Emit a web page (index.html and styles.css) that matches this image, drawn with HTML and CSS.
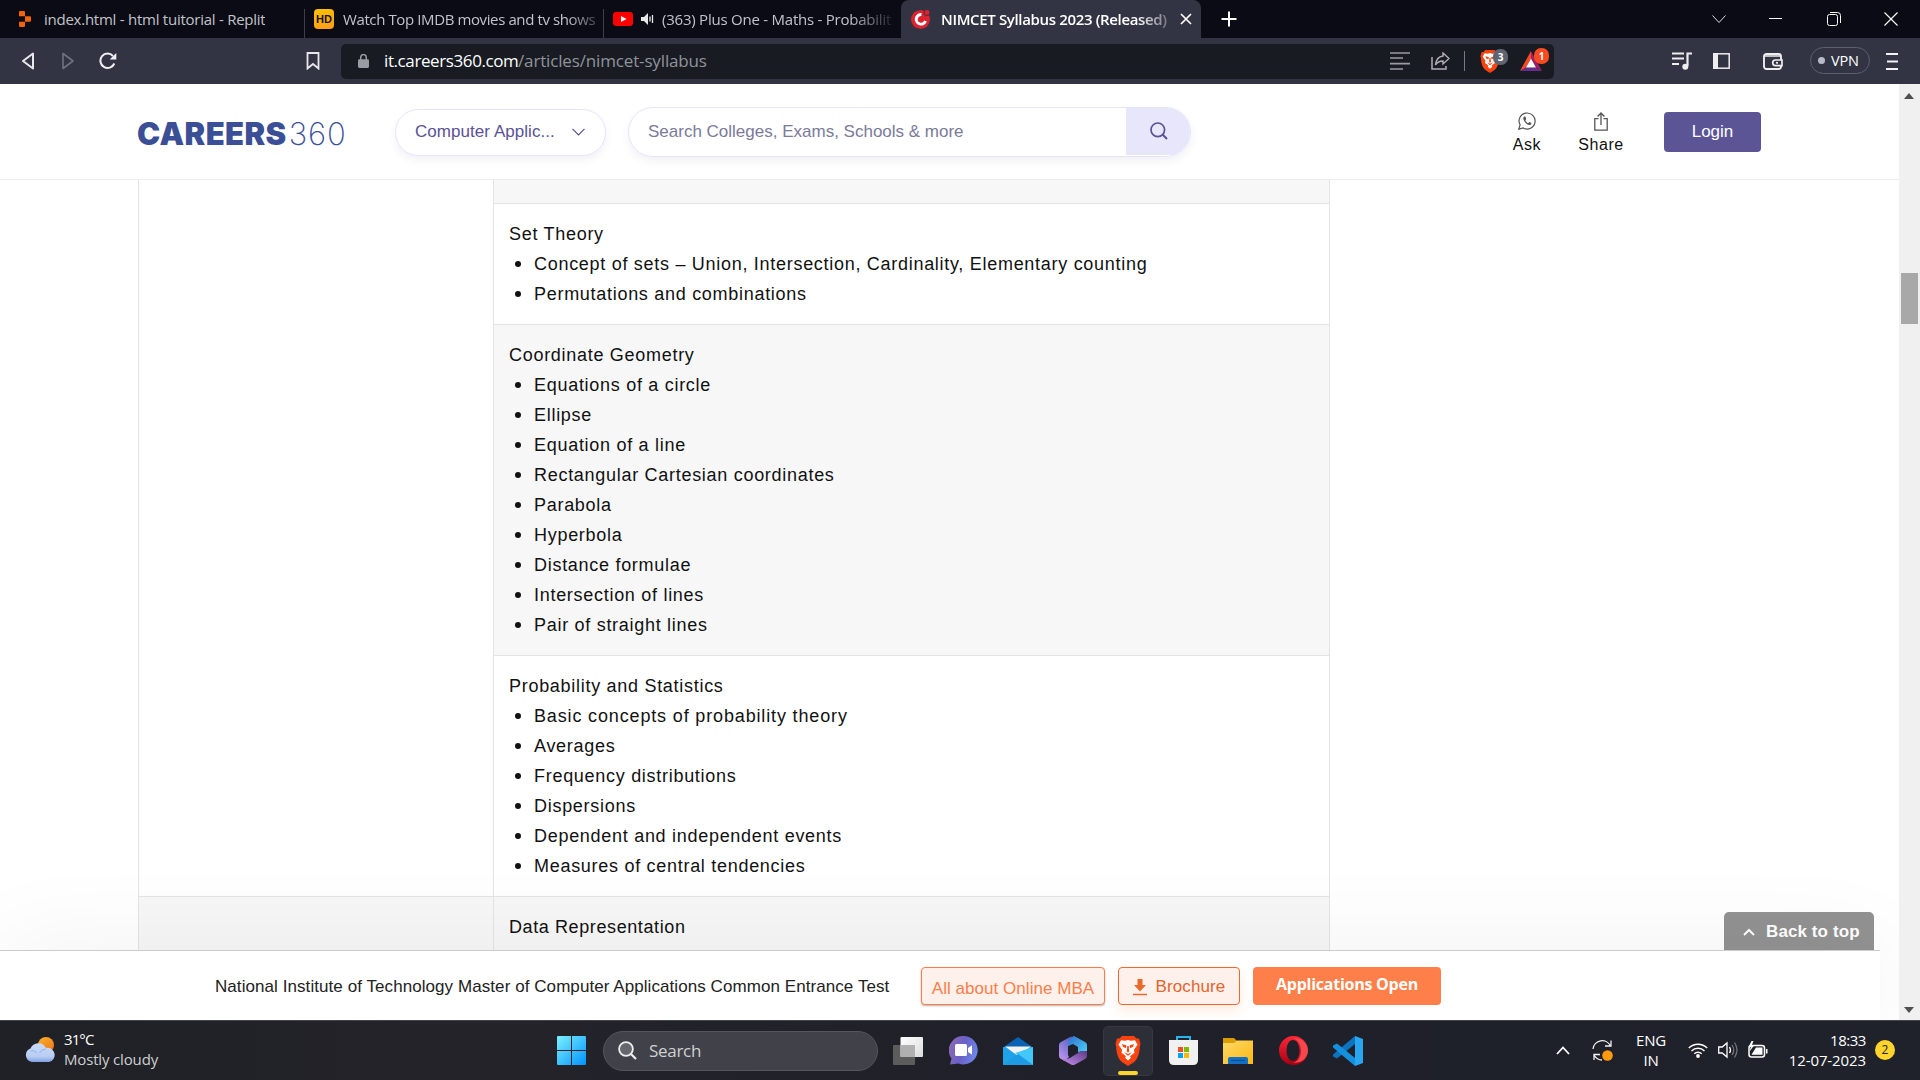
FILE: index.html
```html
<!DOCTYPE html>
<html lang="en">
<head>
<meta charset="utf-8">
<title>NIMCET Syllabus 2023 (Released)</title>
<link rel="stylesheet" href="styles.css">
</head>
<body>
<div class="screen">

  <div class="tabstrip">
    <div class="tab t1">
      <svg class="fav" width="12" height="16" viewBox="0 0 12 16"><path fill="#f26207" d="M0 1q0-1 1-1h4q1 0 1 1v4.300H0zM6 5.300h5q1 0 1 1v3.400q0 1-1 1H6zM0 10.700h6V15q0 1-1 1H1q-1 0-1-1z"/></svg>
      <span class="tt tt1">index.html - html tuitorial - Replit</span>
    </div>
    <div class="tab t2">
      <span class="hd">HD</span>
      <span class="tt tt2">Watch Top IMDB movies and tv shows</span>
    </div>
    <div class="tab t3">
      <svg class="fav" width="20" height="14" viewBox="0 0 20 14"><rect width="20" height="14" rx="3" fill="#f00"/><path d="M8 4l5.500 3L8 10z" fill="#fff"/></svg>
      <svg class="spk" width="13" height="12" viewBox="0 0 13 12"><path fill="#e8e8ea" d="M0 4h3l4-4v12L3 8H0z"/><path d="M9 3.500v5M11.500 2v8" stroke="#e8e8ea" stroke-width="1.300"/></svg>
      <span class="tt tt3">(363) Plus One - Maths - Probabilit</span>
    </div>
    <div class="tab active">
      <svg class="fav" width="20" height="20" viewBox="0 0 20 20"><circle cx="9.500" cy="10.500" r="9.500" fill="#d9232e"/><path d="M10.500 5.500a4.800 4.800 0 1 0 4 6.500" fill="none" stroke="#fff" stroke-width="3"/><circle cx="16" cy="3.500" r="3" fill="#e3202c" stroke="#323444"/></svg>
      <span class="tt tta">NIMCET Syllabus 2023 (Released)</span>
      <svg width="12" height="12" viewBox="0 0 12 12"><path d="M1 1l10 10M11 1L1 11" stroke="#fff" stroke-width="1.700"/></svg>
    </div>
    <svg class="plus" width="16" height="16" viewBox="0 0 16 16"><path d="M8 .5v15M.5 8h15" stroke="#fff" stroke-width="2"/></svg>
    <div class="winbtns">
      <svg width="14" height="14" viewBox="0 0 14 14"><path d="M.5 3.500L7 10.500l6.500-7" fill="none" stroke="#ddd"/></svg>
      <svg width="14" height="14" viewBox="0 0 14 14"><path d="M0 6.500h13" stroke="#fff"/></svg>
      <svg width="14" height="14" viewBox="0 0 14 14"><rect x=".5" y="2.500" width="10" height="11" rx="2" fill="none" stroke="#fff"/><path d="M3 .5h7.500a3 3 0 0 1 3 3V11" fill="none" stroke="#fff"/></svg>
      <svg width="14" height="14" viewBox="0 0 14 14"><path d="M.5.5l13 13M13.500.5l-13 13" stroke="#fff" stroke-width="1.100"/></svg>
    </div>
  </div>

  <div class="toolbar">
    <svg class="back" width="14" height="18" viewBox="0 0 14 18"><path d="M12 1.500v15L2 9z" fill="none" stroke="#e8e8ec" stroke-width="2" stroke-linejoin="round"/></svg>
    <svg class="fwd" width="14" height="18" viewBox="0 0 14 18"><path d="M2 1.500v15L12 9z" fill="none" stroke="#70727e" stroke-width="1.600" stroke-linejoin="round"/></svg>
    <svg class="reload" width="18" height="18" viewBox="0 0 18 18"><path d="M15.300 11.500A7.200 7.200 0 1 1 14 4" fill="none" stroke="#f0f0f3" stroke-width="2"/><path d="M17.300 1v6.500h-6.600z" fill="#f0f0f3"/></svg>
    <svg class="mark" width="14" height="18" viewBox="0 0 14 18"><path d="M1.500 1h11v15.500L7 12l-5.500 4.500z" fill="none" stroke="#e8e8ec" stroke-width="1.800"/></svg>
    <div class="urlbar">
      <svg class="lock" width="11" height="14" viewBox="0 0 12 15"><rect y="5.500" width="12" height="9.500" rx="1.500" fill="#9a9ca4"/><path d="M3 6V3.500a3 3 0 0 1 6 0V6" fill="none" stroke="#9a9ca4" stroke-width="1.700"/></svg>
      <span class="host">it.careers360.com</span><span class="path">/articles/nimcet-syllabus</span>
      <svg class="reader" width="20" height="18" viewBox="0 0 20 18"><path d="M0 1h20M0 6h13M0 11.700h20M0 17h13" stroke="#9b9ca1" stroke-width="1.700"/></svg>
      <svg class="shr" width="19" height="18" viewBox="0 0 19 18"><path d="M1 5v12h14v-3" fill="none" stroke="#aeb0b5" stroke-width="1.500"/><path d="M12 1l6 5.500-6 5.500V9c-4 0-6 1.500-7.500 4C5 8 7.500 4.500 12 4z" fill="none" stroke="#aeb0b5" stroke-width="1.400"/></svg>
      <i class="vsep"></i>
      <span class="ext"><svg width="20" height="23" viewBox="0 0 26 30"><use href="#brave"/></svg><b class="gray">3</b></span>
      <span class="ext bat"><svg width="22" height="20" viewBox="0 0 22 20"><path d="M11 0L0 20l6-3.500 5-9z" fill="#ff4724"/><path d="M0 20h22l-6-3.500H6z" fill="#662d91"/><path d="M11 0l11 20-6-3.500-5-9z" fill="#9e1f63"/><path d="M11 7.500l5 9H6z" fill="#fff"/></svg><b class="red">1</b></span>
    </div>
    <svg class="music" width="20" height="18" viewBox="0 0 20 18"><path d="M0 1.500h12M0 6.500h12M0 12h7" stroke="#eee" stroke-width="2"/><path d="M15.500 14V1.500H20" fill="none" stroke="#eee" stroke-width="2.200"/><circle cx="13.300" cy="14.800" r="3" fill="#eee"/></svg>
    <svg class="side" width="17" height="16" viewBox="0 0 17 16"><rect x=".8" y=".8" width="15.400" height="14.400" fill="none" stroke="#eee" stroke-width="1.500"/><path d="M0 0h5v16H0z" fill="#eee"/></svg>
    <svg class="wallet" width="20" height="17" viewBox="0 0 20 17"><rect x="1" y="1" width="17" height="15" rx="2.500" fill="none" stroke="#eee" stroke-width="1.900"/><path d="M2 3h15" stroke="#eee" stroke-width="1.500"/><path d="M19 7h-6.500a2.800 2.800 0 0 0 0 5.600H19z" fill="#323444" stroke="#eee" stroke-width="1.700"/><circle cx="14" cy="9.800" r="1.100" fill="#eee"/></svg>
    <span class="vpn"><i></i>VPN</span>
    <svg class="menu" width="12" height="17" viewBox="0 0 12 17"><path d="M0 1h12M1 8.500h11M0 16h12" stroke="#f2f2f4" stroke-width="1.900"/></svg>
  </div>

  <div class="viewport">
    <div class="page">
      <header class="site">
        <div class="logo"><b>CAREERS</b><span>360</span></div>
        <div class="domain">Computer Applic...<svg width="13" height="8" viewBox="0 0 13 8"><path d="M.5.8l6 6 6-6" fill="none" stroke="#5a5296" stroke-width="1.200"/></svg></div>
        <div class="search"><span>Search Colleges, Exams, Schools &amp; more</span>
          <div class="go"><svg width="18" height="18" viewBox="0 0 18 18"><circle cx="7.800" cy="7.800" r="6.800" fill="none" stroke="#5a5296" stroke-width="1.700"/><path d="M12.800 12.800l4.200 4.200" stroke="#5a5296" stroke-width="2"/></svg></div>
        </div>
        <div class="act ask"><svg width="18" height="18" viewBox="0 0 18 18"><path d="M.8 17.200l1.300-4.300A8 8 0 1 1 5.200 16z" fill="none" stroke="#555" stroke-width="1.200"/><path d="M6.500 4.500c-1.500.7-1.500 2.300-.5 4.200s3 4 5.200 4.300c1.500.2 2.300-.8 2.200-1.900L11.300 10l-1.200 1.200C8.900 10.700 7.900 9.700 7.300 8.300l1-1.200-.8-2.300z" fill="#555"/></svg>Ask</div>
        <div class="act share"><svg width="14" height="19" viewBox="0 0 14 19"><path d="M4.500 6.700H.8v11.500h12.400V6.700H9.500M7 13V1.500M3.600 4.500L7 1l3.400 3.500" fill="none" stroke="#555" stroke-width="1.300"/></svg>Share</div>
        <div class="login">Login</div>
      </header>

      <div class="content">
        <div class="table">
          <div class="colA"><div class="spanCell"></div><div class="nextCell"></div></div>
          <div class="colB">
            <div class="cell g stub"></div>
            <div class="cell">
              <p>Set Theory</p>
              <ul><li>Concept of sets – Union, Intersection, Cardinality, Elementary counting</li><li>Permutations and combinations</li></ul>
            </div>
            <div class="cell g">
              <p>Coordinate Geometry</p>
              <ul><li>Equations of a circle</li><li>Ellipse</li><li>Equation of a line</li><li>Rectangular Cartesian coordinates</li><li>Parabola</li><li>Hyperbola</li><li>Distance formulae</li><li>Intersection of lines</li><li>Pair of straight lines</li></ul>
            </div>
            <div class="cell">
              <p>Probability and Statistics</p>
              <ul><li class="wide">Basic concepts of probability theory</li><li>Averages</li><li>Frequency distributions</li><li>Dispersions</li><li>Dependent and independent events</li><li>Measures of central tendencies</li></ul>
            </div>
            <div class="cell g last"><p>Data Representation</p></div>
          </div>
        </div>
        <div class="totop"><svg width="12" height="8" viewBox="0 0 12 8"><path d="M1 7l5-5 5 5" fill="none" stroke="#fff" stroke-width="2"/></svg>Back to top</div>
      </div>

      <div class="sticky">
        <span class="exam">National Institute of Technology Master of Computer Applications Common Entrance Test</span>
        <span class="btn mba">All about Online MBA</span>
        <span class="btn bro"><svg width="14" height="17" viewBox="0 0 14 17"><path d="M4.500 0h5v6H13l-6 6.500L1 6h3.500z" fill="#ea6a2c"/><path d="M0 15.500h14" stroke="#ea6a2c" stroke-width="1.500"/></svg>Brochure</span>
        <span class="btn app">Applications Open</span>
      </div>
    </div>
    <div class="scroll">
      <svg width="10" height="6" viewBox="0 0 10 6"><path d="M0 6l5-6 5 6z" fill="#505050"/></svg>
      <div class="thumb"></div>
      <svg class="dn" width="10" height="6" viewBox="0 0 10 6"><path d="M0 0l5 6 5-6z" fill="#505050"/></svg>
    </div>
  </div>

  <div class="taskbar">
    <div class="weather">
      <svg width="30" height="25" viewBox="0 0 30 25"><defs><linearGradient id="cl" x2="0" y2="1"><stop stop-color="#c9dcfa"/><stop offset=".7" stop-color="#b9cdf2"/><stop offset="1" stop-color="#7fa3e6"/></linearGradient><linearGradient id="sun" x2=".6" y2="1"><stop stop-color="#f7b52c"/><stop offset="1" stop-color="#f0761a"/></linearGradient></defs><circle cx="21" cy="8" r="8" fill="url(#sun)"/><path d="M7 25a7 7 0 0 1-1.500-13.500A8.500 8.500 0 0 1 21 11a7 7 0 0 1 3 14z" fill="url(#cl)"/><path d="M5.500 14q3-1.500 6 1.500M21 12q-5 .5-6.500 4" fill="none" stroke="#8fb0ea"/></svg>
      <div><div class="deg">31°C</div><div class="sky">Mostly cloudy</div></div>
    </div>
    <div class="center">
      <svg class="win" width="29" height="29" viewBox="0 0 29 29"><defs><linearGradient id="wg" gradientUnits="userSpaceOnUse" x1="0" y1="0" x2="29" y2="29"><stop stop-color="#7df1ff"/><stop offset="1" stop-color="#0091ff"/></linearGradient></defs><path fill="url(#wg)" d="M0 1q0-1 1-1h13v14H0zM15 0h13q1 0 1 1v13H15zM0 15h14v14H1q-1 0-1-1zM15 15h14v13q0 1-1 1H15z"/></svg>
      <div class="tsearch"><svg width="19" height="19" viewBox="0 0 19 19"><circle cx="8" cy="8" r="6.900" fill="#66676e" stroke="#eee" stroke-width="1.800"/><path d="M13 13l5 5" stroke="#eee" stroke-width="2.200"/></svg>Search</div>
      <div class="app"><svg width="30" height="28" viewBox="0 0 30 28"><defs><linearGradient id="tv" x2="1" y2="1"><stop stop-color="#fff"/><stop offset="1" stop-color="#dcdcdc"/></linearGradient></defs><rect y="8" width="22" height="20" rx="1" fill="#5c5c5c"/><rect x="7.500" width="22.500" height="20" rx="1" fill="url(#tv)"/><path d="M7.500 8H22v12H7.500z" fill="#b0b0b0"/></svg></div>
      <div class="app"><svg width="29" height="29" viewBox="0 0 29 29"><defs><linearGradient id="ch" x1="0" y1=".3" x2="1" y2=".6"><stop stop-color="#8a69b3"/><stop offset=".5" stop-color="#6a60c8"/><stop offset="1" stop-color="#6e8ae8"/></linearGradient></defs><path d="M14.500 0a14.200 14.200 0 1 1-5 27.500L1 28.500l1.500-6A14.300 14.300 0 0 1 14.500 0z" fill="url(#ch)"/><rect x="6" y="8" width="12" height="12" rx="1.500" fill="#fff"/><path d="M19 12l4-2.800v9.600L19 16z" fill="#fff"/></svg></div>
      <div class="app"><svg width="30" height="28" viewBox="0 0 30 28"><path d="M15 0l15 10.500H0z" fill="#0a62b5"/><path d="M0 10h30v18H0z" fill="#1fa3e8"/><path d="M2 9.500h26L15 19z" fill="#f2f2f2"/><path d="M30 10v18L12 16z" fill="#41c8f8"/><path d="M0 28l15-11 15 11z" fill="#1d9be4"/></svg></div>
      <div class="app"><svg width="28" height="29" viewBox="0 0 28 29"><defs><linearGradient id="m1" x1=".8" y1="0" x2="0" y2="1"><stop stop-color="#4a5fc0"/><stop offset="1" stop-color="#c99af0"/></linearGradient><linearGradient id="m2" x1="0" y1="0" x2="1" y2="1"><stop stop-color="#2f6fd0"/><stop offset="1" stop-color="#4fd8f8"/></linearGradient><linearGradient id="m3" x1="0" y1="1" x2="1" y2="0"><stop stop-color="#c890f0"/><stop offset="1" stop-color="#5c3a86"/></linearGradient></defs><path d="M12 .5L2 6Q0 7 0 9v11q0 2 2 3l4 2 4-4-1-2v-9l8-6z" fill="url(#m1)"/><path d="M10 4q4-3 4-4 1-.2 2 .6L26 6q2 1 2 3v10l-9-3v-5l-5-3-5 2z" fill="url(#m2)"/><path d="M28 15v5q0 2-2 3l-10 5.500q-2 1-4 0L3 23.500q8-.5 11-3.500l5-3 2-2z" fill="url(#m3)"/></svg></div>
      <div class="app on"><svg width="26" height="30" viewBox="0 0 26 30"><g id="brave"><path d="M7 0h12l2.500 2.500H24L25.500 8l-.7 2.500c0 7-2.300 13-6.300 16L13 30l-5.500-3.500c-4-3-6.300-9-6.300-16L.5 8 2 2.500h2.500z" fill="#fb4310"/><path d="M13 4l3 .8 4-.5 2.500 4.500-3.500 5 .5 3-4.500 3.500 1 1.500-3 2.700-3-2.700 1-1.500L6.500 16.800l.5-3-3.500-5L6 4.300l4 .5z" fill="#fff"/><path d="M7 8l4.500 1.500L11 12l-3-1zM19 8l-4.500 1.500.5 2.500 3-1zM12.300 10h1.400l.5 5.500-1.200 1-1.200-1zM9 16l4 2 4-2-3.500 3.500h-1z" fill="#fb4310"/></g></svg><i></i></div>
      <div class="app"><svg width="29" height="29" viewBox="0 0 29 29"><path d="M8 5V1h13v4" fill="none" stroke="#25b4f0" stroke-width="2"/><path d="M0 4h29v20q0 5-5 5H5q-5 0-5-5z" fill="#f1f1f1"/><path d="M9 11h5v5H9z" fill="#f25022"/><path d="M15 11h5v5h-5z" fill="#7fba00"/><path d="M9 17h5v5H9z" fill="#00a4ef"/><path d="M15 17h5v5h-5z" fill="#ffb900"/></svg></div>
      <div class="app"><svg width="30" height="26" viewBox="0 0 30 26"><defs><linearGradient id="fo" x2="1" y2="1"><stop stop-color="#ffd968"/><stop offset="1" stop-color="#fbb912"/></linearGradient></defs><path d="M0 0h11l3 3v5H0z" fill="#dd9b04"/><path d="M0 5h11l3-2.500h16V26H0z" fill="url(#fo)"/><path d="M5 26v-5q0-2 2-2h16q2 0 2 2v5z" fill="#1370c4"/><path d="M8 22.500h14" stroke="#0b4f94" stroke-width="1.200"/></svg></div>
      <div class="app"><svg width="29" height="29" viewBox="0 0 29 29"><defs><linearGradient id="op" x2="0" y2="1"><stop stop-color="#ff2636"/><stop offset="1" stop-color="#a70014"/></linearGradient></defs><path fill-rule="evenodd" d="M14.500 0a14.500 14.500 0 1 1 0 29 14.500 14.500 0 0 1 0-29zm-.5 4c-4 0-6.500 5-6.500 10.500S10 25 14 25s6.500-5 6.500-10.500S18 4 14 4z" fill="url(#op)"/><path d="M14 2.500C24 1 29 9 29 14.500S24 28 14 26.500c4 0 8-5 8-12s-4-12-8-12z" fill="#f5484c"/></svg></div>
      <div class="app"><svg width="30" height="30" viewBox="0 0 30 30"><path d="M22 0l8 3v24l-8 3z" fill="#2aa5f0"/><path d="M22 0v8L4 22.500 0 20.500v-2z" fill="#0a74bf"/><path d="M22 30v-8L4 7.500 0 9.500v2z" fill="#1490df"/></svg></div>
    </div>
    <div class="tray">
      <svg class="up" width="14" height="9" viewBox="0 0 14 9"><path d="M1 8l6-6.500L13 8" fill="none" stroke="#fff" stroke-width="1.800"/></svg>
      <svg class="sync" width="21" height="21" viewBox="0 0 21 21"><path d="M1 9A9.200 9.200 0 0 1 18.500 6M19 .5V6h-6M2 20v-5.500h6M2 15q3 5 8 5" fill="none" stroke="#f2f2f2" stroke-width="1.300"/><circle cx="15.500" cy="15.500" r="5.300" fill="#ff9a0c"/></svg>
      <div class="lang">ENG<br>IN</div>
      <svg class="wifi" width="20" height="16" viewBox="0 0 20 16"><path d="M.8 6a13 13 0 0 1 18.400 0M3.500 9a9.200 9.200 0 0 1 13 0M6.300 11.800a5.300 5.300 0 0 1 7.400 0" fill="none" stroke="#fff" stroke-width="1.400"/><circle cx="10" cy="14" r="1.900" fill="#fff"/></svg>
      <svg class="vol" width="20" height="18" viewBox="0 0 20 18"><path d="M.7 6h3.500L9 2v14l-4.800-4H.7z" fill="none" stroke="#fff" stroke-width="1.300"/><path d="M11.500 6q2 3 0 6" fill="none" stroke="#fff" stroke-width="1.300"/><path d="M14 4q3.500 5 0 10M16.500 1.500q5 7.500 0 15" fill="none" stroke="#70737b" stroke-width="1.300"/></svg>
      <svg class="batt" width="20" height="16" viewBox="0 0 20 16"><rect x="1" y="3.500" width="15.500" height="11.500" rx="2.500" fill="none" stroke="#fff" stroke-width="1.500"/><path d="M18 7h1.500v4.500H18z" fill="#fff"/><path d="M3.500 12.800L8 5.500h6.500v7.300z" fill="#fff"/><path d="M3.500-1L.5 5h2.300L1.500 9.500 6 3.500H3.700L5.500-1z" fill="#fff"/></svg>
      <div class="clock"><div class="time">18:33</div><div>12-07-2023</div></div>
      <span class="notif">2</span>
    </div>
  </div>
</div>
</body>
</html>
```
FILE: styles.css
```css
* { box-sizing: border-box; }
body { margin: 0; overflow: hidden; }
svg { display: block; flex: none; }
.screen { width: 1920px; height: 1080px; display: flex; flex-direction: column; font-family: "Open Sans", sans-serif; }

/* browser tabs */
.tabstrip { height: 38px; background: #0b0b15; display: flex; align-items: center; color: #c2c3c9; font-size: 15px; }
.tab { height: 38px; display: flex; align-items: center; flex: none; }
.tt { white-space: nowrap; overflow: hidden; line-height: 24px; flex: none; margin-bottom: 1px; }
.t1 { width: 304px; padding-left: 19px; }
.tt1 { margin-left: 13px; letter-spacing: -.25px; }
.t2, .t3 { position: relative; }
.t2::before, .t3::before { content: ""; position: absolute; left: 0; top: 9px; width: 1px; height: 29px; background: #3e3e48; }
.t2 { width: 299px; padding-left: 10px; }
.hd { width: 20px; height: 20px; border-radius: 4px; background: linear-gradient(160deg, #ffc400, #ff9a1a); color: #17110a; font: 700 11px/20px "Liberation Sans", sans-serif; text-align: center; }
.tt2 { margin-left: 9px; letter-spacing: -.39px; width: 254px; -webkit-mask-image: linear-gradient(90deg, #000 88%, rgba(0,0,0,.3)); }
.t3 { width: 298px; padding-left: 10px; }
.spk { margin: 0 8px 0 8px; }
.tt3 { letter-spacing: -.23px; width: 229px; -webkit-mask-image: linear-gradient(90deg, #000 82%, rgba(0,0,0,.15)); }
.active { width: 300px; padding-left: 10px; background: #323444; border-radius: 8px 8px 0 0; color: #fff; font-weight: 600; }
.tta { margin: 0 12px 0 10px; letter-spacing: -.35px; width: 227px; -webkit-mask-image: linear-gradient(90deg, #000 86%, rgba(0,0,0,.3)); }
.plus { margin-left: 20px; }
.winbtns { margin: 0 22px 0 auto; display: flex; gap: 43.5px; }

/* browser toolbar */
.toolbar { height: 46px; background: #323444; display: flex; align-items: center; padding-left: 21px; }
.fwd { margin-left: 26px; }
.reload { margin-left: 24px; }
.mark { margin-left: 189px; }
.urlbar { margin-left: 21px; width: 1213px; height: 35px; border-radius: 5px; background: #191b22; display: flex; align-items: center; padding-left: 17px; font-size: 17px; line-height: 24px; }
.lock { margin-right: 15px; }
.host { color: #fff; letter-spacing: -.4px; width: 134px; white-space: nowrap; }
.path { color: #90939b; letter-spacing: -.15px; }
.reader { margin-left: auto; }
.shr { margin-left: 21px; }
.vsep { width: 1px; height: 20px; background: #777a82; margin: 0 15px 0 14px; }
.ext { position: relative; flex: none; width: 40px; }
.ext b { position: absolute; left: 13px; top: -1px; width: 15px; height: 16px; border-radius: 7px; font: 700 10px/16px "Open Sans", sans-serif; color: #fff; text-align: center; }
.ext .gray { background: #5f6470; }
.ext .red { background: #fb4a22; }
.bat { width: 34px; }
.ext.bat b { left: 14px; top: -3px; }
.music { margin-left: 118px; }
.side { margin-left: 21px; }
.wallet { margin-left: 33px; }
.vpn { margin: 0 0 1px 27px; width: 60px; height: 27px; border: 1px solid #5d6071; border-radius: 14px; display: flex; align-items: center; gap: 6px; padding-left: 7px; color: #fff; font-size: 14.5px; letter-spacing: -.2px; }
.vpn i { width: 7px; height: 7px; border-radius: 50%; background: #b9bac8; flex: none; }
.menu { margin-left: 16px; }

/* web page */
.viewport { height: 936px; display: flex; font-family: "Liberation Sans", Arial, sans-serif; }
.page { width: 1899px; height: 936px; background: #fff; overflow: hidden; position: relative; display: flex; flex-direction: column; }
.scroll { width: 21px; background: #f0f0f0; display: flex; flex-direction: column; align-items: center; padding: 9px 1px 7px 0; }
.thumb { width: 17px; height: 51px; margin-top: 174px; background: #a8a8a8; margin-left: 1px; }
.dn { margin-top: auto; }
.site { height: 96px; flex: none; border-bottom: 1px solid #ededed; display: flex; padding-left: 137px; background: #fff; }
.logo { width: 258px; padding-top: 31px; color: #3b4f97; font: 900 31px/38px Inter, sans-serif; letter-spacing: .4px; display: flex; gap: 2px; }
.logo b { font-weight: 900; }
.logo span { font-weight: 200; letter-spacing: 1px; }
.domain { margin-top: 25px; width: 211px; height: 47px; border: 1px solid #e6e5f8; border-radius: 24px; box-shadow: 0 4px 8px rgba(60,60,120,.07); color: #5a5296; font-size: 17px; line-height: 43px; letter-spacing: .05px; padding-left: 19px; display: flex; align-items: flex-start; }
.domain svg { margin: 18px 0 0 17px; }
.search { margin: 23px 0 0 22px; width: 563px; height: 50px; border: 1px solid #e6e5f8; border-radius: 25px; box-shadow: 0 4px 8px rgba(60,60,120,.07); color: #7b7a99; font-size: 17px; line-height: 47px; padding-left: 19px; display: flex; justify-content: space-between; overflow: hidden; flex: none; }
.go { width: 64px; height: 47px; background: #e7e6fa; padding: 14px 0 0 24px; }
.act { font-size: 16px; letter-spacing: .6px; line-height: 20px; color: #111; display: flex; flex-direction: column; align-items: center; gap: 5px; padding-top: 28px; width: 50px; flex: none; }
.ask { margin-left: 311px; }
.share { margin-left: 24px; }
.share svg { margin-bottom: -1px; }
.login { margin: 28px 0 0 38px; width: 97px; height: 40px; border-radius: 4px; background: #5b5596; color: #fff; font-size: 17px; line-height: 40px; text-align: center; flex: none; }

.content { height: 770px; flex: none; overflow: hidden; padding-left: 138px; position: relative; }
.table { width: 1192px; display: flex; border: solid #e4e4e4; border-width: 0 1px; font-size: 18px; line-height: 30px; letter-spacing: .71px; color: #111; }
.colA { width: 354px; display: flex; flex-direction: column; }
.spanCell { height: 716px; }
.nextCell { flex: 1; border-top: 1px solid #e4e4e4; background: #f7f7f7; }
.colB { flex: 1; border-left: 1px solid #e4e4e4; }
.cell { border-top: 1px solid #e4e4e4; padding: 15px; }
.g { background: #f7f7f7; }
.stub { height: 23px; padding: 0; border: 0; }
.last { height: 60px; letter-spacing: .6px; }
.table p { margin: 0; }
.table ul { margin: 0; padding: 0; list-style: none; }
.table li { display: flex; align-items: center; height: 30px; white-space: nowrap; }
.table li::before { content: ""; width: 6px; height: 6px; border-radius: 50%; background: #111; margin: 0 13px 0 6px; }
.table .wide { letter-spacing: .85px; }
.totop { position: absolute; right: 25px; bottom: 0; width: 150px; height: 38px; border-radius: 5px 5px 0 0; background: #929292; color: #fff; font-size: 17px; font-weight: 700; letter-spacing: .1px; display: flex; align-items: center; gap: 11px; padding: 1px 0 0 19px; }

.sticky { position: relative; width: 1880px; height: 70px; flex: none; background: #fff; border-top: 1px solid #ccc; box-shadow: 0 0 100px rgba(0,0,0,.065); display: flex; padding: 16px 0 0 215px; font-size: 17px; color: #222; }
.exam { letter-spacing: .07px; line-height: 40px; width: 706px; flex: none; }
.btn { height: 38px; border-radius: 4px; line-height: 41px; text-align: center; flex: none; }
.mba { width: 184px; border: 1px solid #fb7e4a; background: #fef0eb; color: #fb7e4a; letter-spacing: .04px; box-shadow: 0 1px 2px rgba(0,0,0,.3); }
.bro { width: 122px; margin: 0 13px; border: 1px solid #ea6a2c; background: #fef0eb; color: #e4642c; display: flex; align-items: center; justify-content: center; gap: 9px; line-height: 38px; padding-top: 2px; letter-spacing: .1px; box-shadow: 0 6px 12px rgba(255,120,60,.15); }
.sticky .btn.app { width: 188px; background: #ff7f4a; color: #fff; font: 700 16px/34px "Open Sans", sans-serif; letter-spacing: -.25px; display: block; }

/* Windows taskbar */
.taskbar { height: 60px; background: linear-gradient(90deg, #1f2126, #24232a 25%, #1f2029 55%, #1f222b); border-top: 1px solid #43444a; display: flex; color: #fff; font-size: 15px; line-height: 20px; }
.weather { width: 557px; padding: 8px 0 0 25px; display: flex; gap: 9px; }
.weather svg { margin-top: 8px; }
.deg { letter-spacing: -.9px; }
.sky { color: #cfcfd2; letter-spacing: -.16px; }
.center { display: flex; align-items: center; height: 59px; width: 818px; }
.tsearch { margin: 0 5px 0 17px; width: 275px; flex: none; height: 40px; border-radius: 20px; border: 1px solid #55565d; background: #414249; color: #d0d0d2; font-size: 17px; letter-spacing: -.3px; display: flex; align-items: center; gap: 12px; padding-left: 14px; }
.center .app { width: 50px; height: 50px; margin-right: 5px; flex: none; display: flex; align-items: center; justify-content: center; position: relative; }
.on { background: #2d2f38; border: 1px solid #373941; border-radius: 5px; }
.on i { position: absolute; left: 14px; bottom: 0; width: 20px; height: 4px; border-radius: 2px; background: #ffd42c; }
.tray { flex: 1; display: flex; align-items: center; padding-left: 181px; height: 58px; }
.sync { margin-left: 22px; }
.lang { margin-left: 16px; width: 44px; text-align: center; letter-spacing: -.2px; }
.wifi { margin-left: 15px; }
.vol, .batt { margin-left: 10px; overflow: visible; }
.clock { width: 98px; text-align: right; letter-spacing: -.1px; }
.time { letter-spacing: -.45px; }
.notif { margin-left: 9px; width: 20px; height: 20px; border-radius: 50%; background: #ffd42c; color: #222; font-size: 12px; text-align: center; }
```
